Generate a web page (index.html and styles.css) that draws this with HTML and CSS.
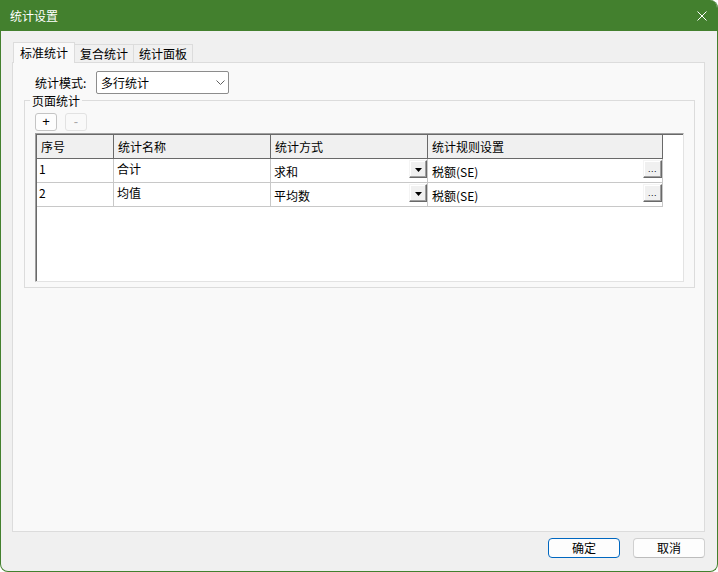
FILE: index.html
```html
<!DOCTYPE html>
<html lang="zh-CN">
  <head>
    <meta charset="UTF-8" />
    <meta name="viewport" content="width=device-width, initial-scale=1.0" />
    <title>统计设置</title>
    <link rel="stylesheet" href="styles.css">
  </head>
  <body>
    <div class="dialog">
      <header class="titlebar">
        <span class="title">统计设置</span>
        <svg class="close" width="10" height="10" viewBox="0 0 10 10">
          <path d="M0.5 0.5L9.5 9.5M9.5 0.5L0.5 9.5" stroke="#fff" stroke-width="1" />
        </svg>
      </header>
      <div class="body">
        <div class="tabs">
          <div class="tab active">标准统计</div>
          <div class="tab">复合统计</div>
          <div class="tab">统计面板</div>
        </div>
        <section class="tabPanel">
          <div class="modeRow">
            <label class="modeLabel">统计模式:</label>
            <div class="select">
              <span>多行统计</span>
              <svg width="9" height="5" viewBox="0 0 9 5">
                <path d="M0.5 0.5L4.5 4.5L8.5 0.5" fill="none" stroke="#606060" stroke-width="1" />
              </svg>
            </div>
          </div>
          <fieldset class="group">
            <legend>页面统计</legend>
            <div class="groupBody">
              <div class="toolbar">
                <button class="toolBtn">+</button>
                <button class="toolBtn" disabled>-</button>
              </div>
              <div class="grid">
                <div class="gridRow head">
                  <div class="cell">序号</div>
                  <div class="cell">统计名称</div>
                  <div class="cell">统计方式</div>
                  <div class="cell rule">统计规则设置</div>
                </div>
                <div class="gridRow">
                  <div class="cell num">1</div>
                  <div class="cell">合计</div>
                  <div class="cell combo">
                    <span class="comboText">求和</span>
                    <button class="cellBtn drop">
                      <svg width="7" height="4" viewBox="0 0 7 4"><path d="M0 0H7L3.5 4Z" fill="#000" /></svg>
                    </button>
                  </div>
                  <div class="cell combo rule">
                    <span class="comboText">税额(SE)</span>
                    <button class="cellBtn more"><span>...</span></button>
                  </div>
                </div>
                <div class="gridRow">
                  <div class="cell num">2</div>
                  <div class="cell">均值</div>
                  <div class="cell combo">
                    <span class="comboText">平均数</span>
                    <button class="cellBtn drop">
                      <svg width="7" height="4" viewBox="0 0 7 4"><path d="M0 0H7L3.5 4Z" fill="#000" /></svg>
                    </button>
                  </div>
                  <div class="cell combo rule">
                    <span class="comboText">税额(SE)</span>
                    <button class="cellBtn more"><span>...</span></button>
                  </div>
                </div>
              </div>
            </div>
          </fieldset>
        </section>
        <footer class="footer">
          <button class="btn primary">确定</button>
          <button class="btn">取消</button>
        </footer>
      </div>
    </div>
  </body>
</html>
```

FILE: styles.css
```css
body {
  margin: 0;
  background: #fff;
  font-family: "Noto Sans CJK SC", "Liberation Sans", sans-serif;
  font-size: 12px;
  color: #000;
}
.dialog {
  width: 718px;
  height: 572px;
  box-sizing: border-box;
  border: 1px solid #43802e;
  border-top: none;
  border-radius: 0 8px 8px 8px;
  overflow: hidden;
  background: #f0f0f0;
  display: flex;
  flex-direction: column;
}
.titlebar {
  height: 31px;
  flex: none;
  background: #43802e;
  color: #fff;
  display: flex;
  align-items: center;
  justify-content: space-between;
  padding: 0 10px 0 9px;
}
.title {
  line-height: 14px;
}
.body {
  flex: 1;
  display: flex;
  flex-direction: column;
  padding-top: 11px;
  min-height: 0;
}
.tabs {
  display: flex;
  align-items: flex-end;
  margin-left: 12px;
}
.tab {
  height: 17px;
  line-height: 17px;
  padding: 0 5px;
  border: 1px solid #dcdcdc;
  border-bottom: none;
  background: #f0f0f0;
  margin-left: -1px;
}
.tab.active {
  height: 20px;
  line-height: 19px;
  padding: 0 6px;
  margin-left: 0;
  margin-bottom: -1px;
  background: #f9f9f9;
  position: relative;
  z-index: 1;
}
.tabPanel {
  flex: 1;
  margin: 0 12px 0 11px;
  border: 1px solid #dcdcdc;
  background: #f9f9f9;
  display: flex;
  flex-direction: column;
}
.modeRow {
  display: flex;
  align-items: center;
  margin-top: 8px;
  padding-left: 22px;
}
.modeLabel {
  width: 61px;
  line-height: 14px;
}
.select {
  width: 133px;
  height: 23px;
  box-sizing: border-box;
  border: 1px solid #8c8c8c;
  border-radius: 2px;
  background: #fff;
  display: flex;
  align-items: center;
  justify-content: space-between;
  padding: 0 3px 0 4px;
  line-height: 14px;
}
.group {
  margin: 0 9px 0 11px;
  padding: 0;
  border: 1px solid #dcdcdc;
  min-width: 0;
}
.group legend {
  margin-left: 5px;
  padding: 0 2px;
  line-height: 13px;
}
.groupBody {
  padding: 6px 10px 5px 10px;
}
.toolbar {
  display: flex;
  gap: 8px;
}
.toolBtn {
  width: 22px;
  height: 18px;
  box-sizing: border-box;
  padding: 0;
  border: 1px solid #c4c4c4;
  border-radius: 3px;
  background: #fdfdfd;
  font-family: "Liberation Sans", sans-serif;
  font-size: 13px;
  line-height: 14px;
  color: #000;
}
.toolBtn:disabled {
  border-color: #e2e2e2;
  color: #a8a8a8;
  background: #f9f9f9;
}
.grid {
  margin-top: 2px;
  height: 149px;
  box-sizing: border-box;
  background: #fff;
  border-top: 1px solid #a0a0a0;
  border-left: 1px solid #a0a0a0;
  border-right: 1px solid #e3e3e3;
  border-bottom: 1px solid #e3e3e3;
  box-shadow: inset 1px 1px 0 #696969;
  padding: 1px 0 0 1px;
}
.gridRow {
  display: grid;
  grid-template-columns: 77px 157px 157px 235px;
}
.cell {
  height: 24px;
  box-sizing: border-box;
  border-right: 1px solid #c8c8c8;
  border-bottom: 1px solid #c8c8c8;
  padding: 3px 0 0 3px;
  line-height: 14px;
}
.head .cell {
  background: #f0f0f0;
  border-color: #696969;
  padding: 0 0 0 4px;
  line-height: 23px;
}
.cell.num {
  padding-left: 2px;
}
.cell.rule {
  padding-left: 4px;
}
.cell.combo {
  display: flex;
  justify-content: space-between;
  align-items: flex-start;
  padding-top: 1px;
}
.comboText {
  padding-top: 5px;
  line-height: 14px;
}
.cellBtn {
  height: 18px;
  box-sizing: border-box;
  padding: 0;
  background: #f0f0f0;
  border-top: 1px solid #f4f4f4;
  border-left: 1px solid #f4f4f4;
  border-right: 1px solid #696969;
  border-bottom: 1px solid #696969;
  box-shadow: inset -1px -1px 0 #a0a0a0, inset 1px 1px 0 #fff;
  display: flex;
  align-items: center;
  justify-content: center;
}
.cellBtn.drop {
  width: 18px;
  padding-top: 2px;
}
.cellBtn.more {
  width: 19px;
  align-items: flex-end;
}
.cellBtn.more span {
  font-family: "Liberation Sans", sans-serif;
  font-size: 9px;
  line-height: 9px;
  letter-spacing: 0.5px;
  padding-bottom: 3px;
  color: #000;
}
.footer {
  height: 39px;
  flex: none;
  box-sizing: border-box;
  display: flex;
  justify-content: flex-end;
  gap: 13px;
  padding: 6px 12px 0 0;
}
.btn {
  width: 72px;
  height: 20px;
  box-sizing: border-box;
  padding: 0;
  border: 1px solid #d0d0d0;
  border-bottom-color: #bcbcbc;
  border-radius: 4px;
  background: #fdfdfd;
  font-family: inherit;
  font-size: 12px;
  line-height: 18px;
  color: #000;
}
.btn.primary {
  border: 1px solid #0067c0;
}
```
